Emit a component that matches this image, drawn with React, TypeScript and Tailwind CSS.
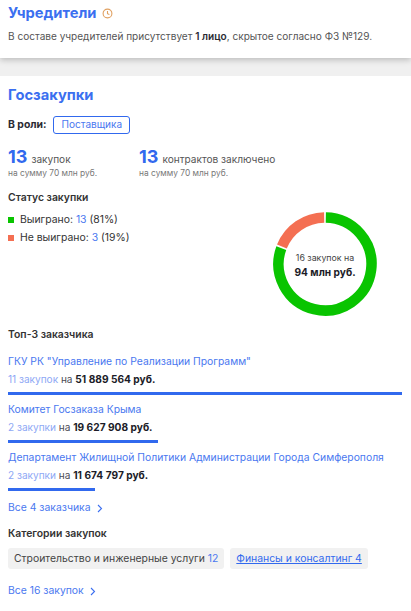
import React from "react";

const font = { fontFamily: "Inter, 'Noto Sans', sans-serif" };

function arc(cx: number, cy: number, r: number, a0: number, a1: number) {
  const p = (a: number) => {
    const t = ((a - 90) * Math.PI) / 180;
    return `${cx + r * Math.cos(t)} ${cy + r * Math.sin(t)}`;
  };
  return `M ${p(a0)} A ${r} ${r} 0 ${a1 - a0 > 180 ? 1 : 0} 1 ${p(a1)}`;
}

function Chevron() {
  return (
    <svg width="6" height="9" viewBox="0 0 6 9" fill="none" className="ml-[6px] mt-px">
      <path d="M1 1l3.5 3.5L1 8" stroke="#3b6ff0" strokeWidth="1.1" />
    </svg>
  );
}

function Customer({ name, count, sum, bar }: { name: string; count: string; sum: string; bar: string }) {
  return (
    <div className="mb-[7px]">
      <div className="whitespace-nowrap text-[10.35px] leading-[14px] text-[#4a78f0]">{name}</div>
      <div className="mt-[4px] text-[10.05px] leading-[14px] text-[#4a4a55]">
        <span className="text-[#8ea8f5]">{count}</span> на <span className="text-[10.2px] font-bold text-[#1c1c28]">{sum}</span>
      </div>
      <div className={`mt-[6px] h-[3px] bg-[#3169ee] ${bar}`} />
    </div>
  );
}

export default function App() {
  return (
    <div style={font} className="h-[611px] w-[411px] overflow-hidden bg-white text-[#333]">
      <section className="relative h-[58px] bg-white px-2 pt-[3px] shadow-[0_2px_6px_rgba(0,0,0,0.22)]">
        <div className="flex items-center gap-[6px]">
          <h2 className="text-[14.7px] font-bold leading-5 text-[#3b6ff0]">Учредители</h2>
          <svg width="11" height="11" viewBox="0 0 11 11" fill="none" stroke="#e0a060" strokeWidth="1.1">
            <circle cx="5.5" cy="5.5" r="4.4" />
            <path d="M5.5 3v2.7L7.4 6.6" />
          </svg>
        </div>
        <p className="mt-[6px] whitespace-nowrap text-[10.07px] leading-[14px] text-[#555]">
          В составе учредителей присутствует <b className="font-semibold text-[#2a2a33]">1 лицо</b>, скрытое согласно ФЗ №129.
        </p>
      </section>
      <div className="h-[18px] bg-[#f0f0f0]" />
      <section className="bg-white px-2">
        <h2 className="pt-[9px] text-[14.7px] font-bold leading-5 text-[#3b6ff0]">Госзакупки</h2>
        <div className="mt-[11px] flex items-center">
          <span className="text-[10.4px] font-bold text-[#2a2a33]">В роли:</span>
          <span className="ml-[7px] flex h-[18px] items-center rounded-[3px] border border-[#3169ee] px-[7px] text-[10.05px] text-[#4a78f0]">Поставщика</span>
        </div>

        <div className="mt-[13px] flex">
          <div className="w-[131px]">
            <div className="flex items-baseline leading-[20px]">
              <span className="text-[18px] font-bold text-[#3169ee]">13</span>
              <span className="ml-1 text-[10.1px] text-[#555]">закупок</span>
            </div>
            <div className="-mt-[2px] text-[8.4px] leading-3 text-[#777]">на сумму 70 млн руб.</div>
          </div>
          <div>
            <div className="flex items-baseline leading-[20px]">
              <span className="text-[18px] font-bold text-[#3169ee]">13</span>
              <span className="ml-1 text-[10.1px] text-[#555]">контрактов заключено</span>
            </div>
            <div className="-mt-[2px] text-[8.4px] leading-3 text-[#777]">на сумму 70 млн руб.</div>
          </div>
        </div>

        <div className="mt-[12px] text-[10.4px] font-semibold leading-[14px] text-[#333]">Статус закупки</div>
        <div className="flex justify-between pr-[26px]">
          <div className="mt-[6px] text-[10.4px] leading-[18px] text-[#333]">
            <div className="flex items-center">
              <span className="mr-[6px] h-[6px] w-[6px] bg-[#09c400]" />
              Выиграно:&nbsp; <span className="text-[#4a78f0]">13</span>&nbsp;(81%)
            </div>
            <div className="flex items-center">
              <span className="mr-[6px] h-[6px] w-[6px] bg-[#f46f52]" />
              Не выиграно:&nbsp; <span className="text-[#4a78f0]">3</span>&nbsp;(19%)
            </div>
          </div>
          <div className="relative mt-[7px] h-[104px] w-[104px]">
            <svg width="104" height="104" viewBox="0 0 104 104" fill="none" strokeWidth="10.5">
              <path d={arc(52, 52, 46.5, 1, 290)} stroke="#09c400" />
              <path d={arc(52, 52, 46.5, 292, 359)} stroke="#f46f52" />
            </svg>
            <div className="absolute inset-0 flex flex-col items-center justify-center pt-[2px]">
              <div className="text-[8.8px] leading-[14px] text-[#444]">16 закупок на</div>
              <div className="text-[10.2px] font-bold leading-[14px] text-[#1c1c28]">94 млн руб.</div>
            </div>
          </div>
        </div>

        <div className="mt-[12px] text-[10.4px] font-semibold leading-[14px] text-[#333]">Топ-3 заказчика</div>
        <div className="mt-[12px]">
          <Customer name={'ГКУ РК "Управление по Реализации Программ"'} count="11 закупок" sum="51 889 564 руб." bar="w-[394px]" />
          <Customer name="Комитет Госзаказа Крыма" count="2 закупки" sum="19 627 908 руб." bar="w-[150px]" />
          <Customer name="Департамент Жилищной Политики Администрации Города Симферополя" count="2 закупки" sum="11 674 797 руб." bar="w-[87px]" />
        </div>

        <div className="mt-[10px] flex items-center text-[10.4px] leading-[14px] text-[#4a78f0]">
          Все 4 заказчика <Chevron />
        </div>
        <div className="mt-[12px] text-[10.4px] font-semibold leading-[14px] text-[#333]">Категории закупок</div>
        <div className="mt-[7px] flex gap-[6px]">
          <span className="flex h-[21px] items-center rounded-[3px] bg-[#f1f1f1] px-[6px] text-[10.4px] text-[#444]">
            Строительство и инженерные услуги&nbsp;<span className="text-[#4a78f0]">12</span>
          </span>
          <span className="flex h-[21px] items-center rounded-[3px] bg-[#f1f1f1] px-[6px] text-[10.4px] text-[#3169ee] underline">
            Финансы и консалтинг 4
          </span>
        </div>
        <div className="mt-[15px] flex items-center text-[10.4px] leading-[14px] text-[#4a78f0]">
          Все 16 закупок <Chevron />
        </div>
      </section>
    </div>
  );
}
